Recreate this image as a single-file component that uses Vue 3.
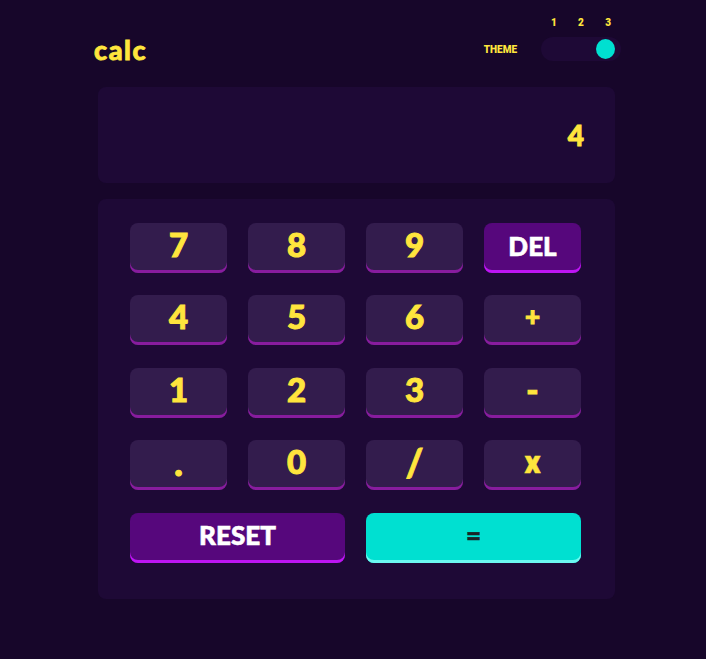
<script setup>
const keys = [
  { t: '7' }, { t: '8' }, { t: '9' }, { t: 'DEL', k: 'del' },
  { t: '4' }, { t: '5' }, { t: '6' }, { t: '+', k: 'op' },
  { t: '1' }, { t: '2' }, { t: '3' }, { t: '-' },
  { t: '.', k: 'dot' }, { t: '0' }, { t: '/', k: 'slash' }, { t: 'x', k: 'times' },
  { t: 'RESET', k: 'del wide' }, { t: '=', k: 'eq wide' },
]
</script>

<template>
  <div class="page">
    <header class="head">
      <div class="logo">calc</div>
      <div class="theme">THEME</div>
      <div class="switch">
        <div class="nums"><span>1</span><span>2</span><span>3</span></div>
        <div class="track"><div class="knob"></div></div>
      </div>
    </header>
    <div class="screen">4</div>
    <div class="pad">
      <button v-for="key in keys" :key="key.t" class="key" :class="key.k">{{ key.t }}</button>
    </div>
  </div>
</template>

<style scoped>
.page {
  width: 517px;
  height: 659px;
  margin-left: 98px;
  font-family: "Lato", "Liberation Sans", sans-serif;
  color: #ffe53d;
  box-sizing: border-box;
}
.head {
  display: flex;
  align-items: flex-end;
  margin: 0 -6px 0 -4px;
  height: 61px;
}
.logo {
  font-size: 27px;
  font-weight: 900;
  line-height: 34px;
  letter-spacing: 1.6px;
  -webkit-text-stroke: 0.8px #ffe53d;
  margin-bottom: -6px;
  margin-right: auto;
}
.theme {
  font-family: "Roboto", sans-serif;
  font-size: 10px;
  font-weight: 900;
  line-height: 12px;
  margin: 0 24px 5px 0;
}
.switch {
  width: 80px;
}
.nums {
  display: flex;
  justify-content: space-between;
  padding: 0 10px 0 10px;
  font-family: "Roboto", sans-serif;
  font-size: 10px;
  font-weight: 900;
  line-height: 12px;
  margin-bottom: 8px;
}
.track {
  height: 24px;
  border-radius: 12px;
  background: #1e0936;
  display: flex;
  justify-content: flex-end;
  align-items: center;
  padding-right: 6px;
}
.knob {
  width: 19px;
  height: 20px;
  border-radius: 50%;
  background: #00e0d1;
}
.screen {
  height: 96px;
  margin-top: 26px;
  border-radius: 8px;
  background: #1e0936;
  display: flex;
  align-items: center;
  justify-content: flex-end;
  padding-right: 31px;
  font-size: 28px;
  font-weight: 900;
  -webkit-text-stroke: 0.9px #ffe53d;
  box-sizing: border-box;
}
.pad {
  margin-top: 16px;
  height: 400px;
  box-sizing: border-box;
  padding: 24px 34px 36px 32px;
  border-radius: 8px;
  background: #1e0936;
  display: grid;
  grid-template-columns: repeat(4, 97px);
  grid-auto-rows: 50px;
  gap: 22.4px 21px;
}
.key {
  border: 0;
  padding: 0 0 7px;
  border-radius: 8px;
  background: #331c4d;
  box-shadow: inset 0 -3px 0 #881c9e;
  color: #ffe53d;
  font-family: inherit;
  font-size: 33px;
  font-weight: 900;
  line-height: 1;
  -webkit-text-stroke: 1px #ffe53d;
}
.op {
  font-size: 26px;
  padding-bottom: 9px;
}
.dot {
  font-size: 36px;
  padding-bottom: 7px;
}
.slash {
  font-size: 38px;
  padding-bottom: 8px;
  -webkit-text-stroke: 0.8px #ffe53d;
}
.times {
  font-family: "Roboto", sans-serif;
  font-size: 31px;
  padding-bottom: 5px;
  -webkit-text-stroke: 0.5px #ffe53d;
}
.del {
  background: #56077c;
  box-shadow: inset 0 -3px 0 #be15f4;
  color: #fff;
  font-size: 26px;
  padding-bottom: 5px;
  -webkit-text-stroke: 0.6px #fff;
}
.eq {
  background: #00e0d1;
  box-shadow: inset 0 -3px 0 #6cf9f1;
  color: #1a2327;
  font-size: 26px;
  padding-bottom: 5px;
  -webkit-text-stroke: 0.6px #1a2327;
}
.wide {
  grid-column: span 2;
}
</style>

<style>
body {
  background: #17062a;
}
</style>
